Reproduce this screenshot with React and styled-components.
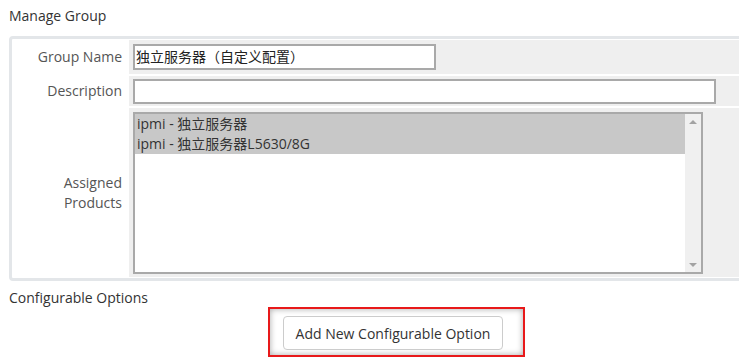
import React from "react";
import styled, { createGlobalStyle } from "styled-components";

const GlobalStyle = createGlobalStyle`
  html, body {
    margin: 0;
    padding: 0;
    background: #fff;
    overflow: hidden;
  }
  body {
    font-family: "Open Sans", "Noto Sans CJK SC", sans-serif;
    font-size: 14px;
    color: #333;
  }
`;

const Page = styled.div`
  width: 775px;
  padding-left: 9px;
`;

const SectionTitle = styled.div`
  font-size: 14px;
  line-height: 18px;
  color: #333;
  margin-top: ${(p) => p.$top || 0}px;
  margin-bottom: ${(p) => p.$bottom || 0}px;
`;

const Panel = styled.div`
  border: 3px solid #e3e6e9;
  border-radius: 4px;
  background: #fff;
  padding: 1px 0;
  display: grid;
  grid-template-columns: 116px 1fr;
  column-gap: 1px;
  row-gap: 2px;
`;

const Label = styled.div`
  display: flex;
  align-items: center;
  justify-content: flex-end;
  text-align: right;
  padding-right: 6px;
  color: #555;
  line-height: 20px;
  height: ${(p) => p.$h}px;
`;

const Field = styled.div`
  background: #efefef;
  display: flex;
  align-items: ${(p) => (p.$top ? "flex-start" : "center")};
  padding-left: 4px;
  padding-top: ${(p) => p.$top || 0}px;
  box-sizing: border-box;
  height: ${(p) => p.$h}px;
`;

const TextInput = styled.div`
  box-sizing: border-box;
  width: ${(p) => p.$w}px;
  height: ${(p) => p.$h || 26}px;
  border: 2px solid #a9a9a9;
  background: #fff;
  padding: 0 1px;
  line-height: 22px;
  font-size: 14px;
  color: #222;
  white-space: nowrap;
`;

const ListBox = styled.div`
  box-sizing: border-box;
  width: 570px;
  height: 162px;
  border: 2px solid #a9a9a9;
  background: #fff;
  display: flex;
`;

const Options = styled.div`
  flex: 1;
`;

const Option = styled.div`
  height: 20px;
  line-height: 20px;
  padding-left: 2px;
  font-size: 14px;
  color: #333;
  background: ${(p) => (p.$selected ? "#c8c8c8" : "transparent")};
`;

const Scrollbar = styled.div`
  width: 16px;
  background: #f0f0f0;
  display: flex;
  flex-direction: column;
  justify-content: space-between;
  align-items: center;
  padding: 6px 0 5px;
`;

const Arrow = styled.div`
  width: 0;
  height: 0;
  border-left: 4px solid transparent;
  border-right: 4px solid transparent;
  ${(p) =>
    p.$down
      ? "border-top: 4px solid #a3a3a3;"
      : "border-bottom: 4px solid #a3a3a3;"}
`;

const ButtonRow = styled.div`
  display: flex;
  justify-content: center;
`;

const Highlight = styled.div`
  border: 2px solid #e8191a;
  padding: 7px 20px 5px 13px;
  box-shadow: inset 0 0 6px rgba(0, 0, 0, 0.35);
`;

const Button = styled.button`
  box-sizing: border-box;
  width: 220px;
  height: 34px;
  border: 1px solid #ccc;
  border-radius: 4px;
  background: #fff;
  font-family: "Open Sans", sans-serif;
  font-size: 14px;
  color: #333;
  padding: 0;
  cursor: pointer;
`;

export default function App() {
  return (
    <>
      <GlobalStyle />
      <Page>
        <SectionTitle $top={7} $bottom={11}>Manage Group</SectionTitle>
        <Panel>
          <Label $h={34}>Group Name</Label>
          <Field $h={34}>
            <TextInput $w={303}>独立服务器（自定义配置）</TextInput>
          </Field>
          <Label $h={30}>Description</Label>
          <Field $h={30}>
            <TextInput $w={583} $h={25} />
          </Field>
          <Label $h={169}>
            Assigned
            <br />
            Products
          </Label>
          <Field $h={169} $top={4}>
            <ListBox>
              <Options>
                <Option $selected>ipmi - 独立服务器</Option>
                <Option $selected>ipmi - 独立服务器L5630/8G</Option>
              </Options>
              <Scrollbar>
                <Arrow />
                <Arrow $down />
              </Scrollbar>
            </ListBox>
          </Field>
        </Panel>
        <SectionTitle $top={8}>Configurable Options</SectionTitle>
        <ButtonRow>
          <Highlight>
            <Button>Add New Configurable Option</Button>
          </Highlight>
        </ButtonRow>
      </Page>
    </>
  );
}
